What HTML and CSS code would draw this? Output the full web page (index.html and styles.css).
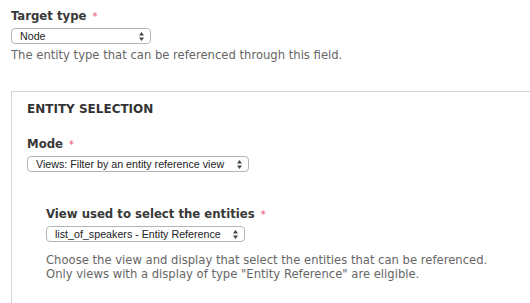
FILE: index.html
```html
<!DOCTYPE html>
<html>
<head>
<meta charset="utf-8">
<link rel="stylesheet" href="styles.css">
</head>
<body>
<div class="page">
  <div class="field field-top">
    <div class="label">Target type <span class="req">*</span></div>
    <span class="select w-node"><select><option>Node</option></select><svg class="arrows" width="5" height="9" viewBox="0 0 5 9"><path d="M2.5 0L5 3.5H0Z M2.5 9L0 5.5H5Z" fill="#444"/></svg></span>
    <div class="desc">The entity type that can be referenced through this field.</div>
  </div>
  <fieldset class="box">
    <div class="legend">ENTITY SELECTION</div>
    <div class="field">
      <div class="label">Mode <span class="req">*</span></div>
      <span class="select w-mode"><select><option>Views: Filter by an entity reference view</option></select><svg class="arrows" width="5" height="9" viewBox="0 0 5 9"><path d="M2.5 0L5 3.5H0Z M2.5 9L0 5.5H5Z" fill="#444"/></svg></span>
    </div>
    <div class="sub">
      <div class="label">View used to select the entities <span class="req">*</span></div>
      <span class="select w-view"><select><option>list_of_speakers - Entity Reference</option></select><svg class="arrows" width="5" height="9" viewBox="0 0 5 9"><path d="M2.5 0L5 3.5H0Z M2.5 9L0 5.5H5Z" fill="#444"/></svg></span>
      <div class="desc desc-2">Choose the view and display that select the entities that can be referenced.<br>Only views with a display of type "Entity Reference" are eligible.</div>
    </div>
  </fieldset>
</div>
</body>
</html>
```
FILE: styles.css
```css
html, body { margin: 0; padding: 0; background: #fff; height: 303px; }
body { font-family: "DejaVu Sans", Verdana, sans-serif; color: #333; overflow: hidden; }
.page { padding: 8px 0 0 11px; }
.label { font-family: "DejaVu Sans Condensed", "DejaVu Sans", sans-serif; font-weight: bold; font-size: 13px; line-height: 16px; height: 16px; color: #383838; }
.req { color: #ee4a78; font-weight: normal; font-size: 11px; margin-left: 2px; }
.select { position: relative; display: block; width: max-content; margin-top: 4px; }
.select select {
  -webkit-appearance: none; appearance: none;
  font-family: "Liberation Sans", Arial, sans-serif; font-size: 10.7px; color: #222;
  height: 16px; line-height: 14px; padding: 0 0 0 8px; margin: 0;
  border: 1px solid #b4b4b4; border-radius: 4px; background: #fff;
  display: block; box-sizing: border-box;
}
.arrows { position: absolute; right: 7px; top: 3.5px; }
.w-node select { width: 140px; }
.w-mode select { width: 222px; }
.w-view select { width: 199px; }
.desc { font-size: 11.6px; line-height: 14px; color: #666; margin-top: 4px; }
.box { margin: 29px 0 0 0; padding: 10px 0 0 15px; border: 1px solid #d4d4d4; border-right: none; border-bottom: none; min-height: 201px; min-inline-size: 0; }
.legend { font-weight: bold; font-size: 12px; line-height: 14px; height: 14px; color: #333; }
.box .field { margin-top: 20px; }
.sub { margin: 34px 0 0 19px; }
.desc-2 { margin-top: 11px; }
```
